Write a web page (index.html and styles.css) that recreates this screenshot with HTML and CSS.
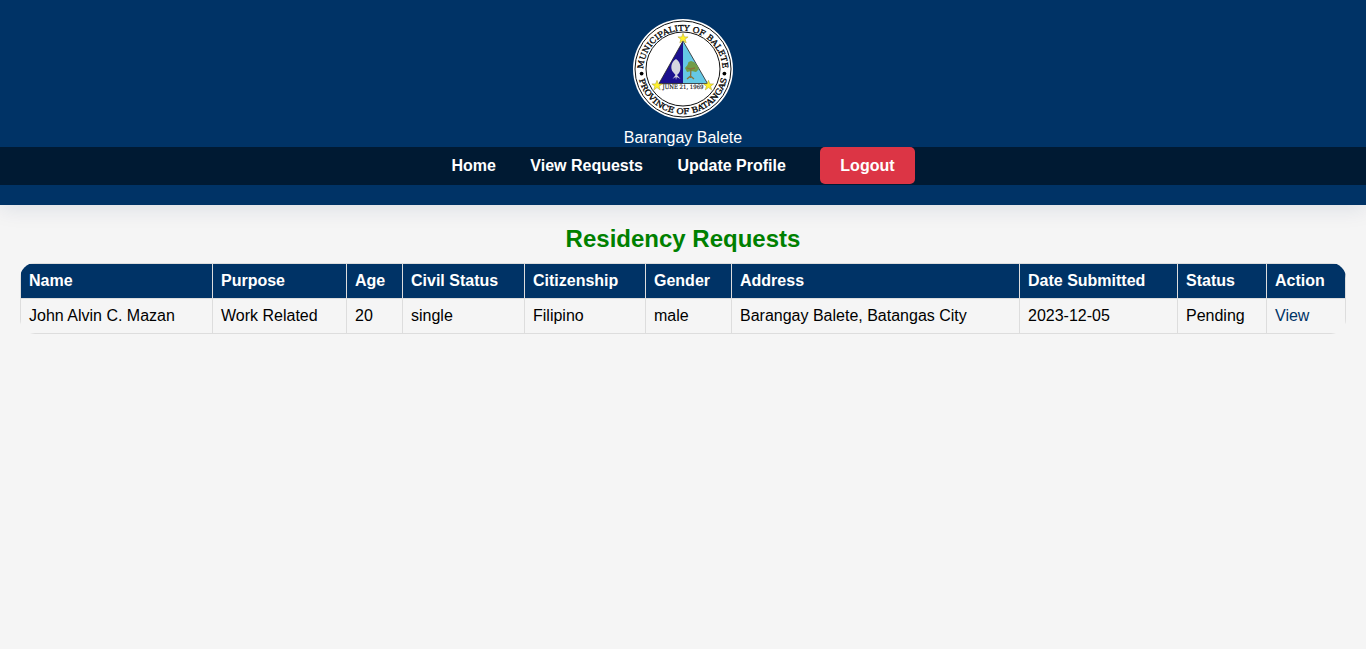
FILE: index.html
```html
<!DOCTYPE html>
<html lang="en">
<head>
<meta charset="utf-8">
<title>Residency Requests</title>
<link rel="stylesheet" href="styles.css">
</head>
<body>
<header class="header">
  <svg class="logo" viewBox="0 0 100 100" role="img" aria-label="Municipality of Balete seal">
    <defs>
      <path id="arc-top" d="M10.300 51.500A39.700 39.700 0 1 1 89.700 51.500"/>
      <path id="arc-bottom" d="M5.800 58.500A45 45 0 0 0 94.200 58.500"/>
      <path id="star" d="M0-5.200L1.400-1.600 5.100-1.600 2.100.7 3.200 4.400 0 2.100-3.200 4.400-2.100.7-5.100-1.600-1.400-1.600z"/>
    </defs>
    <circle cx="50" cy="50" r="50" fill="#fff"/>
    <circle class="ring" cx="50" cy="50" r="48"/>
    <circle class="ring" cx="50" cy="50" r="37"/>
    <text class="seal-text"><textPath href="#arc-top" startOffset="1.500" textLength="121" lengthAdjust="spacingAndGlyphs">MUNICIPALITY OF BALETE</textPath></text>
    <text class="seal-text"><textPath href="#arc-bottom" startOffset="2" textLength="121" lengthAdjust="spacingAndGlyphs">PROVINCE OF BATANGAS</textPath></text>
    <circle cx="8.600" cy="54.600" r="1.900"/>
    <circle cx="91.400" cy="54.600" r="1.900"/>
    <path d="M50 22L26 64.500H50z" fill="#1b108f"/>
    <path d="M50 22L74.500 64.500H50z" fill="#65c8e5"/>
    <path d="M50 22L26 64.500H74.500z" fill="none" stroke="#222" stroke-width=".8"/>
    <path d="M43 40C38 42.500 37 50 40 53L42.500 56 39.500 60 42.500 58 43 61 43.800 58 47.500 60 44 56C49 53 48.500 43 43 40z" fill="#d5d5df"/>
    <path d="M55.500 43L58 42 61 43 64 46 66 50 63 53 58.500 52 54 53 52 49 54.500 46z" fill="#719c48"/>
    <path d="M54 49L57.500 50 62 49M58 49L57.500 59M54 60L57.500 57 61 60" fill="none" stroke="#8b7338" stroke-width="1.300"/>
    <text class="seal-date" x="50" y="70.300" textLength="41" lengthAdjust="spacingAndGlyphs">JUNE 21, 1969</text>
    <g class="stars">
      <use href="#star" x="50" y="19.500"/>
      <use href="#star" x="24" y="66.500"/>
      <use href="#star" x="75.500" y="66.500"/>
    </g>
  </svg>
  <div class="brand">Barangay Balete</div>
  <nav class="nav">
    <a href="#">Home</a>
    <a href="#">View Requests</a>
    <a href="#">Update Profile</a>
    <a href="#" class="logout">Logout</a>
  </nav>
</header>
<main class="content">
  <h2 class="title">Residency Requests</h2>
  <table class="requests">
    <colgroup>
      <col class="c-name"><col class="c-purpose"><col class="c-age"><col class="c-civil"><col class="c-citizen"><col class="c-gender"><col class="c-address"><col class="c-date"><col class="c-status"><col class="c-action">
    </colgroup>
    <thead>
      <tr><th>Name</th><th>Purpose</th><th>Age</th><th>Civil Status</th><th>Citizenship</th><th>Gender</th><th>Address</th><th>Date Submitted</th><th>Status</th><th>Action</th></tr>
    </thead>
    <tbody>
      <tr><td>John Alvin C. Mazan</td><td>Work Related</td><td>20</td><td>single</td><td>Filipino</td><td>male</td><td>Barangay Balete, Batangas City</td><td>2023-12-05</td><td>Pending</td><td><a href="#">View</a></td></tr>
    </tbody>
  </table>
</main>
</body>
</html>
```
FILE: styles.css
```css
body {
  margin: 0;
  background: #f5f5f5;
  font-family: "Liberation Sans", Arial, sans-serif;
  font-size: 16px;
}
.header {
  box-sizing: border-box;
  height: 205px;
  padding-top: 19px;
  background: #003366;
  color: #fff;
  text-align: center;
  box-shadow: 0 4px 20px rgba(0, 40, 102, 0.1);
}
.logo {
  display: block;
  width: 100px;
  height: 100px;
  margin: 0 auto 9px;
}
.ring {
  fill: none;
  stroke: #111;
  stroke-width: 1;
}
.seal-text {
  font: 7.9px "DejaVu Serif", serif;
  fill: #000;
  stroke: #000;
  stroke-width: 0.3;
}
.seal-date {
  font: 6px "DejaVu Serif", serif;
  fill: #111;
  stroke: #111;
  stroke-width: 0.15;
  text-anchor: middle;
}
.stars {
  fill: #fff12b;
  stroke: #a89b28;
  stroke-width: 0.5;
}
.brand {
  height: 19px;
  line-height: 19px;
}
.nav {
  display: flex;
  justify-content: center;
  gap: 34.45px;
  height: 38px;
  background: #001a33;
}
.nav a {
  color: #fff;
  font-weight: bold;
  line-height: 37px;
  text-decoration: none;
}
.nav .logout {
  height: 37px;
  padding: 0 20px;
  border-radius: 5px;
  background: #dc3545;
}
.content {
  padding: 20px 20px 0;
}
.title {
  margin: 0 0 10px;
  color: #008000;
  font-size: 24px;
  line-height: 28px;
  text-align: center;
}
.requests {
  width: 1326px;
  table-layout: fixed;
  border-collapse: collapse;
  border-radius: 15px;
  overflow: hidden;
}
.requests th,
.requests td {
  border: 1px solid #ddd;
  padding: 8px;
  line-height: 18px;
  text-align: left;
  white-space: nowrap;
}
.requests th {
  background: #003366;
  color: #fff;
}
.requests a {
  color: #003366;
  text-decoration: none;
}
.c-name { width: 192px; }
.c-purpose { width: 134px; }
.c-age { width: 56px; }
.c-civil { width: 122px; }
.c-citizen { width: 121px; }
.c-gender { width: 86px; }
.c-address { width: 288px; }
.c-date { width: 158px; }
.c-status { width: 89px; }
.c-action { width: 79px; }
```
